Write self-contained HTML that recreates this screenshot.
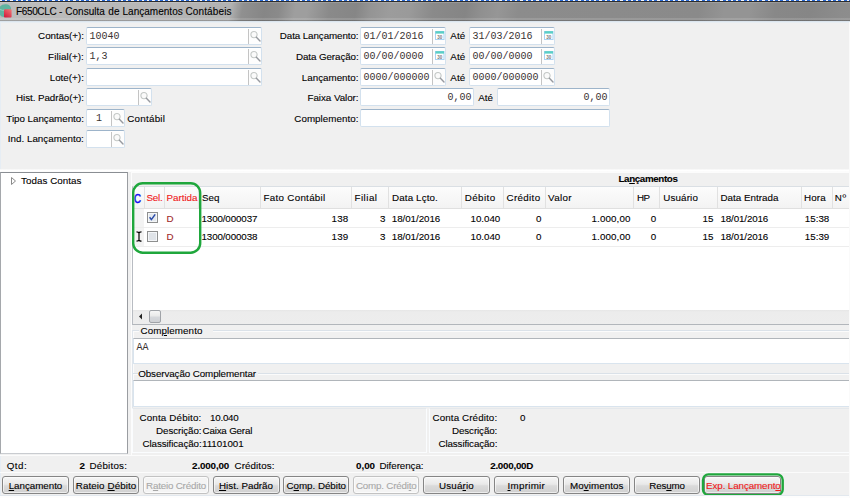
<!DOCTYPE html>
<html><head><meta charset="utf-8"><title>F650CLC - Consulta de Lançamentos Contábeis</title>
<style>
*{box-sizing:border-box;margin:0;padding:0}
html,body{width:850px;height:498px;overflow:hidden;background:#f0f0f0}
body{position:relative;font-family:"Liberation Sans",sans-serif;font-size:9.8px;color:#000}
.a{position:absolute;white-space:nowrap}
.t{position:absolute;white-space:nowrap;height:14px;line-height:14px;-webkit-text-stroke:.1px currentColor}
.in{position:absolute;height:18px;background:#fff;border:1px solid #d3e1ee;border-top-color:#9db4ca;border-radius:2px;font-family:"Liberation Mono",monospace;font-size:10px;line-height:18px;color:#3a3232;padding-left:2.5px;white-space:nowrap;overflow:hidden;letter-spacing:0}
.in.r{text-align:right;padding-right:1.5px}
.ib{position:absolute;top:1px;right:0;bottom:0;width:13px;border-left:1px solid #c4c4c4;background:#fdfdfd}
.ib svg{position:absolute;left:.5px;top:1px}
.btn{position:absolute;top:476px;height:18px;border:1px solid #858585;border-radius:3px;background:linear-gradient(180deg,#f6f6f6 0,#e9e9e9 45%,#dadada 55%,#d0d0d0 100%);box-shadow:inset 0 0 0 1px rgba(255,255,255,.6)}
.btn.d{border-color:#c2c2c2;background:#f4f4f4}
.hs{position:absolute;top:187px;width:1px;height:21px;background:#e1e1e1}
</style></head><body>
<!-- title bar -->
<div class="a" style="left:0;top:0;width:850px;height:1px;background:repeating-linear-gradient(90deg,#f4f7fc 0 2px,#2a6bd8 2px 5px,#f4f7fc 5px 5.26px)"></div>
<div class="a" style="left:0;top:1px;width:850px;height:1px;background:#2c2c2c"></div>
<div class="a" style="left:0;top:2px;width:850px;height:19px;background:linear-gradient(180deg,rgba(255,255,255,.14) 0,rgba(255,255,255,.14) 1px,rgba(255,255,255,0) 1.5px,rgba(255,255,255,0) 15.5px,rgba(255,255,255,.13) 16px,rgba(255,255,255,.13) 18px,rgba(0,0,0,.16) 18px,rgba(0,0,0,.16) 19px),linear-gradient(100deg,#bdbdbd 0,#b8b8b8 120px,#b2b2b2 228px,#909090 240px,#868686 262px,#8a8a8a 276px,#9e9e9e 292px,#9e9e9e 304px,#8a8a8a 326px,#868686 352px,#949494 366px,#9c9c9c 385px,#9a9a9a 405px,#8a8a8a 428px,#858585 460px,#909090 476px,#969696 492px,#8c8c8c 512px,#8a8a8a 690px,#949494 715px,#949494 740px,#888 765px,#868686 800px,#8c8c8c 830px,#8e8e8e 850px)"></div>
<div class="a" style="left:0;top:21px;width:850px;height:2px;background:linear-gradient(180deg,#dbe5ee 0,#dbe5ee 1px,#e8eef3 1px)"></div>
<svg class="a" style="left:0;top:3px" width="14" height="16" viewBox="0 0 14 16"><defs><linearGradient id="rg" x1="1" y1="0" x2="0.3" y2="1"><stop offset="0" stop-color="#f27a78"/><stop offset="1" stop-color="#d4203f"/></linearGradient></defs><path d="M0 3.5 Q2 1 6 1.2 Q10 1.5 11 5 L11 8 L4 14 Q1 14 0 12 Z" fill="#5fb3a0"/><path d="M0 6.5 Q3 8 5 7" stroke="#8fd0c0" stroke-width="1" fill="none"/><rect x="4" y="6.2" width="7.6" height="8.4" rx=".8" fill="url(#rg)"/></svg>
<div class="a" style="left:0;top:23px;width:1px;height:146px;background:#e6edf4"></div><div class="a" style="left:0;top:456px;width:1px;height:39px;background:#e6edf4"></div>

<!-- left form -->
<div class="in" style="left:86px;top:27px;width:176px">10040<span class="ib"><svg width="11" height="12" viewBox="0 0 11 12"><circle cx="4" cy="4.6" r="3.1" fill="#fafafa" stroke="#c4c8c6" stroke-width="1.1"/><path d="M6.4 7.2 L10 11" stroke="#979aa0" stroke-width="1.4" stroke-linecap="round"/></svg></span></div>
<div class="in" style="left:86px;top:47px;width:176px">1,3<span class="ib"><svg width="11" height="12" viewBox="0 0 11 12"><circle cx="4" cy="4.6" r="3.1" fill="#fafafa" stroke="#c4c8c6" stroke-width="1.1"/><path d="M6.4 7.2 L10 11" stroke="#979aa0" stroke-width="1.4" stroke-linecap="round"/></svg></span></div>
<div class="in" style="left:86px;top:68px;width:176px"><span class="ib"><svg width="11" height="12" viewBox="0 0 11 12"><circle cx="4" cy="4.6" r="3.1" fill="#fafafa" stroke="#c4c8c6" stroke-width="1.1"/><path d="M6.4 7.2 L10 11" stroke="#979aa0" stroke-width="1.4" stroke-linecap="round"/></svg></span></div>
<div class="in" style="left:86px;top:88px;width:66px"><span class="ib"><svg width="11" height="12" viewBox="0 0 11 12"><circle cx="4" cy="4.6" r="3.1" fill="#fafafa" stroke="#c4c8c6" stroke-width="1.1"/><path d="M6.4 7.2 L10 11" stroke="#979aa0" stroke-width="1.4" stroke-linecap="round"/></svg></span></div>
<div class="in" style="left:86px;top:109px;width:39px;padding-left:9px">1<span class="ib"><svg width="11" height="12" viewBox="0 0 11 12"><circle cx="4" cy="4.6" r="3.1" fill="#fafafa" stroke="#c4c8c6" stroke-width="1.1"/><path d="M6.4 7.2 L10 11" stroke="#979aa0" stroke-width="1.4" stroke-linecap="round"/></svg></span></div>
<div class="in" style="left:86px;top:130px;width:39px"><span class="ib"><svg width="11" height="12" viewBox="0 0 11 12"><circle cx="4" cy="4.6" r="3.1" fill="#fafafa" stroke="#c4c8c6" stroke-width="1.1"/><path d="M6.4 7.2 L10 11" stroke="#979aa0" stroke-width="1.4" stroke-linecap="round"/></svg></span></div>

<!-- right form -->
<div class="in" style="left:360px;top:27px;width:86px">01/01/2016<span class="ib"><svg width="11" height="12" viewBox="0 0 11 12"><rect x="1.5" y="1.5" width="8.5" height="8" fill="#fff" stroke="#a9d2f2" stroke-width="1"/><rect x="1.5" y="1.2" width="8.5" height="2.4" fill="#59cfc6"/><text x="5.8" y="8.6" font-family="Liberation Sans,sans-serif" font-size="4.5" font-weight="bold" fill="#7a7a7a" text-anchor="middle">30</text></svg></span></div>
<div class="in" style="left:469px;top:27px;width:86px">31/03/2016<span class="ib"><svg width="11" height="12" viewBox="0 0 11 12"><rect x="1.5" y="1.5" width="8.5" height="8" fill="#fff" stroke="#a9d2f2" stroke-width="1"/><rect x="1.5" y="1.2" width="8.5" height="2.4" fill="#59cfc6"/><text x="5.8" y="8.6" font-family="Liberation Sans,sans-serif" font-size="4.5" font-weight="bold" fill="#7a7a7a" text-anchor="middle">30</text></svg></span></div>
<div class="in" style="left:360px;top:47px;width:86px">00/00/0000<span class="ib"><svg width="11" height="12" viewBox="0 0 11 12"><rect x="1.5" y="1.5" width="8.5" height="8" fill="#fff" stroke="#a9d2f2" stroke-width="1"/><rect x="1.5" y="1.2" width="8.5" height="2.4" fill="#59cfc6"/><text x="5.8" y="8.6" font-family="Liberation Sans,sans-serif" font-size="4.5" font-weight="bold" fill="#7a7a7a" text-anchor="middle">30</text></svg></span></div>
<div class="in" style="left:469px;top:47px;width:86px">00/00/0000<span class="ib"><svg width="11" height="12" viewBox="0 0 11 12"><rect x="1.5" y="1.5" width="8.5" height="8" fill="#fff" stroke="#a9d2f2" stroke-width="1"/><rect x="1.5" y="1.2" width="8.5" height="2.4" fill="#59cfc6"/><text x="5.8" y="8.6" font-family="Liberation Sans,sans-serif" font-size="4.5" font-weight="bold" fill="#7a7a7a" text-anchor="middle">30</text></svg></span></div>
<div class="in" style="left:360px;top:68px;width:86px">0000/000000<span class="ib"><svg width="11" height="12" viewBox="0 0 11 12"><circle cx="4" cy="4.6" r="3.1" fill="#fafafa" stroke="#c4c8c6" stroke-width="1.1"/><path d="M6.4 7.2 L10 11" stroke="#979aa0" stroke-width="1.4" stroke-linecap="round"/></svg></span></div>
<div class="in" style="left:469px;top:68px;width:86px">0000/000000<span class="ib"><svg width="11" height="12" viewBox="0 0 11 12"><circle cx="4" cy="4.6" r="3.1" fill="#fafafa" stroke="#c4c8c6" stroke-width="1.1"/><path d="M6.4 7.2 L10 11" stroke="#979aa0" stroke-width="1.4" stroke-linecap="round"/></svg></span></div>
<div class="in r" style="left:360px;top:88px;width:114px">0,00</div>
<div class="in r" style="left:497px;top:88px;width:113px">0,00</div>
<div class="in" style="left:360px;top:109px;width:250px"></div>

<!-- lower area -->
<div class="a" style="left:0;top:169px;width:850px;height:3px;background:linear-gradient(180deg,#f5f5f5,#fff 50%,#fafafa)"></div>
<div class="a" style="left:0;top:172px;width:128px;height:282px;background:#fff;border:1px solid #8a8e93;border-left-color:#a5a8ac;border-right-color:#9a9da1;border-bottom-color:#c9ccd0"></div>
<svg class="a" style="left:9.6px;top:176px" width="8" height="10" viewBox="0 0 8 10"><path d="M1.5 1.5 L5.5 5 L1.5 8.5 Z" fill="#fff" stroke="#8a8a8a" stroke-width="1"/></svg>

<div class="a" style="left:131px;top:172px;width:719px;height:283px;border-left:1px solid #fcfcfc;border-top:1px solid #fcfcfc"></div>

<!-- grid -->
<div class="a" style="left:132px;top:186px;width:718px;height:139px;background:#fff;border-top:1px solid #dadfe4;border-left:1px solid #b8bcc2;border-bottom:1px solid #b2b6bb"></div>
<div class="a" style="left:133px;top:187px;width:717px;height:22px;background:linear-gradient(180deg,#fcfcfc,#f3f3f3);border-bottom:1px solid #e0e0e0"></div>
<div class="a" style="left:133px;top:209px;width:11px;height:37px;background:#f3f3f3"></div>
<div class="a" style="left:133px;top:227px;width:717px;height:1px;background:#ededed"></div>
<div class="a" style="left:133px;top:246px;width:717px;height:1px;background:#ededed"></div>
<div class="hs" style="left:144px"></div><div class="hs" style="left:164px"></div><div class="hs" style="left:198px"></div><div class="hs" style="left:260px"></div><div class="hs" style="left:351px"></div><div class="hs" style="left:388px"></div><div class="hs" style="left:461px"></div><div class="hs" style="left:503px"></div><div class="hs" style="left:545px"></div><div class="hs" style="left:633px"></div><div class="hs" style="left:659px"></div><div class="hs" style="left:717px"></div><div class="hs" style="left:801px"></div><div class="hs" style="left:832px"></div>
<!-- C header -->
<div class="t" style="left:134px;top:190.6px;font-size:12.2px;-webkit-text-stroke:.45px #1010f0;color:#1010f0;line-height:16px;height:16px;transform:scaleX(.8);transform-origin:0 0">C</div>
<!-- checkboxes -->
<svg class="a" style="left:147px;top:212px" width="11" height="11" viewBox="0 0 11 11"><rect x=".5" y=".5" width="10" height="10" fill="#f4f6f8" stroke="#8e8f8f"/><rect x="2" y="2" width="7" height="7" fill="#e4e9ee"/><path d="M2.6 5.2 L4.4 7.6 L8.2 2.4" fill="none" stroke="#2a4aa8" stroke-width="1.5"/></svg>
<svg class="a" style="left:147px;top:231px" width="11" height="11" viewBox="0 0 11 11"><rect x=".5" y=".5" width="10" height="10" fill="#f4f6f8" stroke="#8e8f8f"/><rect x="2" y="2" width="7" height="7" fill="#dfe3e8"/></svg>
<!-- I-beam -->
<svg class="a" style="left:136px;top:231px" width="6" height="11" viewBox="0 0 6 11"><path d="M.5 .8 Q3 .8 3 2.2 Q3 .8 5.5 .8 M3 1.5 V9.5 M.5 10.2 Q3 10.2 3 8.8 Q3 10.2 5.5 10.2" fill="none" stroke="#000" stroke-width="1.2"/></svg>
<!-- scrollbar -->
<div class="a" style="left:133px;top:310px;width:717px;height:14px;background:linear-gradient(180deg,#e6e6e6 0,#ececec 2px,#ededed 100%)"></div>
<svg class="a" style="left:138px;top:313px" width="5" height="7" viewBox="0 0 5 7"><path d="M4 .5 L1 3.5 L4 6.5 Z" fill="#222"/></svg>
<div class="a" style="left:149px;top:310px;width:12px;height:13px;border:1px solid #a0a3a8;border-radius:2px;background:linear-gradient(180deg,#f6f6f6 0,#eaeaea 45%,#d6d8dc 55%,#cfd1d5 100%)"></div>
<!-- green highlight -->
<svg class="a" style="left:130px;top:180px" width="74" height="76" viewBox="0 0 74 76"><rect x="3.2" y="3.3" width="67" height="69.4" rx="9.5" fill="none" stroke="#1fa73c" stroke-width="2.4"/></svg>

<!-- complemento groups -->
<div class="a" style="left:132px;top:330px;width:718px;height:78px;border-top:1px solid #dae1e8;border-left:1px solid #dfe5eb"></div><div class="a" style="left:133px;top:331px;width:717px;height:76px;border-top:1px solid #fbfbfb;border-left:1px solid #fbfbfb"></div>
<div class="a" style="left:139px;top:328px;width:74px;height:5px;background:#f0f0f0"></div>
<div class="a" style="left:133px;top:338px;width:718px;height:26px;background:#fff;border:1px solid #d9e4ee;border-top-color:#b0b5ba"></div>
<div class="t" style="left:136.6px;top:341px;font-family:'Liberation Mono',monospace;font-size:10px;color:#3a3232;-webkit-text-stroke:0">AA</div>
<div class="a" style="left:133px;top:373px;width:717px;height:1px;background:#dae1e8"></div><div class="a" style="left:134px;top:374px;width:716px;height:1px;background:#fbfbfb"></div>
<div class="a" style="left:138px;top:371px;width:120px;height:5px;background:#f0f0f0"></div>
<div class="a" style="left:133px;top:380px;width:718px;height:27px;background:#fff;border:1px solid #d9e4ee;border-top-color:#b0b5ba"></div>

<!-- info panels -->
<div class="a" style="left:132px;top:408px;width:295px;height:45px;border:1px solid #fafcfe;border-top-color:#e4e8ec"></div>
<div class="a" style="left:429px;top:408px;width:422px;height:45px;border:1px solid #fafcfe;border-top-color:#e4e8ec"></div>

<!-- status bar lines -->
<div class="a" style="left:0;top:455px;width:850px;height:1px;background:#fbfbfb"></div>
<div class="a" style="left:0;top:472px;width:850px;height:1px;background:#fbfbfb"></div>

<!-- buttons -->
<div class="btn" style="left:2px;width:67px"></div>
<div class="btn" style="left:73px;width:66px"></div>
<div class="btn d" style="left:143px;width:66px"></div>
<div class="btn" style="left:213px;width:67px"></div>
<div class="btn" style="left:283px;width:66px"></div>
<div class="btn d" style="left:353px;width:66px"></div>
<div class="btn" style="left:423px;width:67px"></div>
<div class="btn" style="left:494px;width:65px"></div>
<div class="btn" style="left:563px;width:67px"></div>
<div class="btn" style="left:634px;width:66px"></div>
<div class="btn" style="left:704px;width:77px"></div>
<svg class="a" style="left:699px;top:470px" width="90" height="28" viewBox="0 0 90 28"><rect x="4" y="4.4" width="79.7" height="20.7" rx="5.5" fill="none" stroke="#1fa73c" stroke-width="2.4"/></svg>
<div class="a" style="left:0;top:495px;width:850px;height:1px;background:#e2e8ee"></div>
<div class="a" style="left:0;top:496px;width:850px;height:2px;background:#fdfdfd"></div>
<div class="a" style="left:849px;top:22px;width:1px;height:476px;background:#fafafa"></div>

<div class="t" style="left:15.9px;top:4.7px;letter-spacing:-0.33px;font-size:10px;">F650CLC</div>
<div class="t" style="left:59.1px;top:4.7px;letter-spacing:0.60px;font-size:10px;">-</div>
<div class="t" style="left:65.3px;top:4.7px;letter-spacing:0.00px;font-size:10px;">Consulta</div>
<div class="t" style="left:108.3px;top:4.7px;letter-spacing:0.24px;font-size:10px;">de</div>
<div class="t" style="left:122.5px;top:4.7px;letter-spacing:0.02px;font-size:10px;">Lançamentos</div>
<div class="t" style="left:185.4px;top:4.7px;letter-spacing:0.14px;font-size:10px;">Contábeis</div>
<div class="t" style="left:38.1px;top:29.4px;letter-spacing:-0.02px;">Contas(+):</div>
<div class="t" style="left:48.1px;top:50.0px;letter-spacing:0.07px;">Filial(+):</div>
<div class="t" style="left:49.7px;top:70.6px;letter-spacing:0.02px;">Lote(+):</div>
<div class="t" style="left:16.0px;top:91.2px;letter-spacing:-0.06px;">Hist. Padrão(+):</div>
<div class="t" style="left:6.3px;top:112.0px;letter-spacing:-0.03px;">Tipo Lançamento:</div>
<div class="t" style="left:7.7px;top:132.4px;letter-spacing:0.03px;">Ind. Lançamento:</div>
<div class="t" style="left:127.3px;top:112.0px;letter-spacing:0.24px;">Contábil</div>
<div class="t" style="left:279.8px;top:29.4px;letter-spacing:-0.09px;">Data Lançamento:</div>
<div class="t" style="left:296.0px;top:50.0px;letter-spacing:-0.09px;">Data Geração:</div>
<div class="t" style="left:301.8px;top:70.6px;letter-spacing:0.00px;">Lançamento:</div>
<div class="t" style="left:307.5px;top:91.2px;letter-spacing:-0.05px;">Faixa Valor:</div>
<div class="t" style="left:294.3px;top:112.0px;letter-spacing:0.04px;">Complemento:</div>
<div class="t" style="left:450.2px;top:29.4px;letter-spacing:0.19px;">Até</div>
<div class="t" style="left:450.2px;top:50.0px;letter-spacing:0.19px;">Até</div>
<div class="t" style="left:450.2px;top:70.6px;letter-spacing:0.19px;">Até</div>
<div class="t" style="left:478.3px;top:91.2px;letter-spacing:-0.01px;">Até</div>
<div class="t" style="left:21.0px;top:174.3px;letter-spacing:0.05px;">Todas Contas</div>
<div class="t" style="left:618.5px;top:172.4px;letter-spacing:-0.38px;font-weight:bold;">La<u>n</u>çamentos</div>
<div class="t" style="left:146.5px;top:191.0px;letter-spacing:-0.22px;color:#f01818">Sel.</div>
<div class="t" style="left:166.5px;top:191.0px;letter-spacing:-0.01px;color:#f01818">Partida</div>
<div class="t" style="left:201.9px;top:191.0px;letter-spacing:0.05px;">Seq</div>
<div class="t" style="left:263.5px;top:191.0px;letter-spacing:0.29px;">Fato Contábil</div>
<div class="t" style="left:354.5px;top:191.0px;letter-spacing:0.48px;">Filial</div>
<div class="t" style="left:392.1px;top:191.0px;letter-spacing:0.12px;">Data Lçto.</div>
<div class="t" style="left:464.8px;top:191.0px;letter-spacing:0.40px;">Débito</div>
<div class="t" style="left:506.5px;top:191.0px;letter-spacing:0.34px;">Crédito</div>
<div class="t" style="left:548.0px;top:191.0px;letter-spacing:0.37px;">Valor</div>
<div class="t" style="left:636.9px;top:191.0px;letter-spacing:-0.51px;">HP</div>
<div class="t" style="left:663.3px;top:191.0px;letter-spacing:0.13px;">Usuário</div>
<div class="t" style="left:720.5px;top:191.0px;letter-spacing:0.02px;">Data Entrada</div>
<div class="t" style="left:803.9px;top:191.0px;letter-spacing:0.21px;">Hora</div>
<div class="t" style="left:834.8px;top:191.0px;letter-spacing:0.60px;">Nº</div>
<div class="t" style="left:166.5px;top:211.6px;letter-spacing:0.60px;color:#a02828">D</div>
<div class="t" style="left:201.5px;top:211.6px;letter-spacing:-0.13px;">1300/000037</div>
<div class="t" style="left:331.5px;top:211.6px;letter-spacing:0.21px;">138</div>
<div class="t" style="left:380.0px;top:211.6px;letter-spacing:0.35px;">3</div>
<div class="t" style="left:391.8px;top:211.6px;letter-spacing:-0.06px;">18/01/2016</div>
<div class="t" style="left:470.5px;top:211.6px;letter-spacing:-0.04px;">10.040</div>
<div class="t" style="left:536.0px;top:211.6px;letter-spacing:0.60px;">0</div>
<div class="t" style="left:591.5px;top:211.6px;letter-spacing:0.11px;">1.000,00</div>
<div class="t" style="left:650.7px;top:211.6px;letter-spacing:0.60px;">0</div>
<div class="t" style="left:702.5px;top:211.6px;letter-spacing:0.15px;">15</div>
<div class="t" style="left:720.5px;top:211.6px;letter-spacing:-0.14px;">18/01/2016</div>
<div class="t" style="left:804.8px;top:211.6px;letter-spacing:-0.01px;">15:38</div>
<div class="t" style="left:166.5px;top:230.3px;letter-spacing:0.60px;color:#a02828">D</div>
<div class="t" style="left:201.5px;top:230.3px;letter-spacing:-0.13px;">1300/000038</div>
<div class="t" style="left:331.5px;top:230.3px;letter-spacing:0.21px;">139</div>
<div class="t" style="left:380.0px;top:230.3px;letter-spacing:0.35px;">3</div>
<div class="t" style="left:391.8px;top:230.3px;letter-spacing:-0.06px;">18/01/2016</div>
<div class="t" style="left:470.5px;top:230.3px;letter-spacing:-0.04px;">10.040</div>
<div class="t" style="left:536.0px;top:230.3px;letter-spacing:0.60px;">0</div>
<div class="t" style="left:591.5px;top:230.3px;letter-spacing:0.11px;">1.000,00</div>
<div class="t" style="left:650.7px;top:230.3px;letter-spacing:0.60px;">0</div>
<div class="t" style="left:702.5px;top:230.3px;letter-spacing:0.15px;">15</div>
<div class="t" style="left:720.5px;top:230.3px;letter-spacing:-0.14px;">18/01/2016</div>
<div class="t" style="left:804.8px;top:230.3px;letter-spacing:-0.01px;">15:39</div>
<div class="t" style="left:140.5px;top:324.4px;letter-spacing:0.09px;">Com<u>p</u>lemento</div>
<div class="t" style="left:138.2px;top:367.2px;letter-spacing:-0.09px;">Observação Complementar</div>
<div class="t" style="left:139.5px;top:410.8px;letter-spacing:0.16px;">Conta Débito:</div>
<div class="t" style="left:210.1px;top:410.8px;letter-spacing:-0.26px;">10.040</div>
<div class="t" style="left:156.1px;top:424.2px;letter-spacing:-0.09px;">Descrição:</div>
<div class="t" style="left:202.5px;top:424.2px;letter-spacing:-0.19px;">Caixa Geral</div>
<div class="t" style="left:142.5px;top:437.4px;letter-spacing:-0.10px;">Classificação:</div>
<div class="t" style="left:202.1px;top:437.4px;letter-spacing:-0.09px;">11101001</div>
<div class="t" style="left:432.5px;top:410.8px;letter-spacing:0.11px;">Conta Crédito:</div>
<div class="t" style="left:520.0px;top:410.8px;letter-spacing:0.60px;">0</div>
<div class="t" style="left:452.0px;top:424.2px;letter-spacing:-0.11px;">Descrição:</div>
<div class="t" style="left:438.5px;top:437.4px;letter-spacing:-0.12px;">Classificação:</div>
<div class="t" style="left:6.8px;top:459.1px;letter-spacing:0.45px;">Qtd:</div>
<div class="t" style="left:79.5px;top:459.1px;letter-spacing:0.25px;font-weight:bold;">2</div>
<div class="t" style="left:89.5px;top:459.1px;letter-spacing:0.21px;">Débitos:</div>
<div class="t" style="left:192.1px;top:459.1px;letter-spacing:-0.14px;font-weight:bold;">2.000,00</div>
<div class="t" style="left:234.5px;top:459.1px;letter-spacing:0.09px;">Créditos:</div>
<div class="t" style="left:356.0px;top:459.1px;letter-spacing:-0.02px;font-weight:bold;">0,00</div>
<div class="t" style="left:379.5px;top:459.1px;letter-spacing:-0.07px;">Diferença:</div>
<div class="t" style="left:490.2px;top:459.1px;letter-spacing:-0.25px;font-weight:bold;">2.000,00D</div>
<div class="t" style="left:8.7px;top:479.1px;letter-spacing:-0.04px;"><u>L</u>ançamento</div>
<div class="t" style="left:75.8px;top:479.1px;letter-spacing:0.09px;">Rateio <u>D</u>ébito</div>
<div class="t" style="left:146.0px;top:479.1px;letter-spacing:-0.19px;color:#a8a8a8">R<u>a</u>teio Crédito</div>
<div class="t" style="left:219.0px;top:479.1px;letter-spacing:0.01px;"><u>H</u>ist. Padrão</div>
<div class="t" style="left:286.5px;top:479.1px;letter-spacing:-0.03px;">C<u>o</u>mp. Débito</div>
<div class="t" style="left:356.0px;top:479.1px;letter-spacing:-0.21px;color:#a8a8a8">Comp. Crédi<u>t</u>o</div>
<div class="t" style="left:438.9px;top:479.1px;letter-spacing:0.19px;">Usuá<u>r</u>io</div>
<div class="t" style="left:507.5px;top:479.1px;letter-spacing:0.28px;"><u>I</u>mprimir</div>
<div class="t" style="left:569.9px;top:479.1px;letter-spacing:0.08px;">Mo<u>v</u>imentos</div>
<div class="t" style="left:649.3px;top:479.1px;letter-spacing:-0.15px;">Res<u>u</u>mo</div>
<div class="t" style="left:706.1px;top:479.1px;letter-spacing:-0.11px;color:#f01818">Exp. Lançament<u>o</u></div>
</body></html>
